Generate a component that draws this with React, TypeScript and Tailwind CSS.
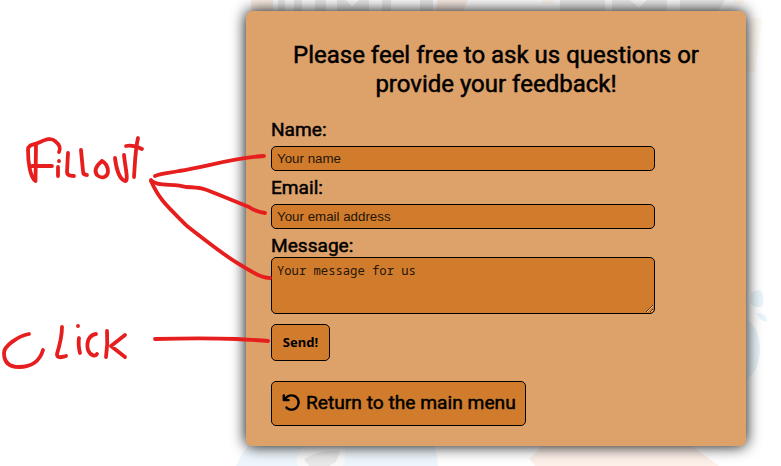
import React from "react";
import { FaArrowRotateLeft } from "react-icons/fa6";

const field =
  "block w-[384px] rounded-[5px] border border-black bg-[#d17c2c] px-[5px] text-black outline-none placeholder:text-[#241506] placeholder:opacity-100";
const textInput = "h-[25px] font-['Liberation_Sans',Arial,sans-serif] text-[13.333px]";
const label =
  "relative top-px block h-[22px] text-[19.1px] leading-[22px] [-webkit-text-stroke:0.5px_black]";

function Backdrop() {
  return (
    <svg className="absolute inset-0" width="781" height="466" viewBox="0 0 781 466" aria-hidden="true">
      <path d="M251 0h22v18h-22zM438 0h30l-9 20h-26z" fill="#fbeee6" />
      <path d="M278 0h7v15h-7zM294 0h8v15h-8zM315 0h11v15h-11zM337 0h9l6 7 7-7h10v15h-32zM382 0h9v15h-9zM420 0h13v15h-13z" fill="#ececec" />
      <path d="M542 0h11v4h-11zM733 0h11v4h-11zM751 18h11l-7 54h-9z" fill="#fef9f1" />
      <path d="M560 0h45v15h-45zM612 0h18l9 8 8-8h20v15h-55zM680 0h45l-9 15h-36z" fill="#ededed" />
      <path d="M748 321c16 10 16 47 0 57zM751 293c8-6 14-2 12 12-5 4-9 2-13-2zM757 313c7 0 10 3 10 9-6-1-9-4-10-9z" fill="#e8f4f9" />
      <path d="M236 466c4-10 8-16 14-22h183c3 7 5 14 5 22z" fill="#edf6fc" />
      <path d="M298 466c-3-10 1-17 10-20h36c3 6 1 13-1 20z" fill="#f8f9f8" />
      <path d="M304 459c12-7 23-10 36-8l-4 11-7 4h-20z" fill="#e8e8e8" />
      <path d="M529 458c6-2 8-9 14-12h149l27 20H535z" fill="#fdf0e9" />
    </svg>
  );
}

function Annotations() {
  return (
    <svg
      className="pointer-events-none absolute inset-0"
      width="781"
      height="466"
      viewBox="0 0 781 466"
      fill="none"
      stroke="#e71e1e"
      strokeWidth="3.8"
      strokeLinecap="round"
      strokeLinejoin="round"
      aria-hidden="true"
    >
      <path d="M36 145L35.500 181C30 177 28 162 28 150C28 144 34 145 39 142.500C45 140 51 137 55 141C60 145 61 148 59 152M32 166H52" />
      <path d="M59 161.200v-.2M58 167v9M68 153L67 172Q67 176 74 176M81 150L83 171Q83 175 87 175" />
      <path d="M102 161C96 166 94 171 97 175C101 179 107 178 108 172C108 167 106 163 102 161M115 158C116 167 119 179 125 181C129 182 125 166 124 155M138 138C135 151 135 164 134 177M126 146C132 145 136 146 142 149" />
      <path d="M155 176C163 173 170 173 179 171C206 167 232 158 264 156" />
      <path d="M151 180C156 187 174 183 186 187C205 188 202 188 217 194L249 207Q256 212 265 213" />
      <path d="M151 181C159 199 166 205 187 226C205 240 225 256 239 264C249 270 260 278 270 278" />
      <path d="M29 334C18 336 4 346 4 353C4 363 10 367 19 367C31 367 40 361 43 350M62 327C62 337 60 344 57 354C57 359 62 357 66 356M78 326v-.2M79 338C78 344 79 349 80 353M96 334C89 335 86 342 88 350C91 357 96 356 97 354M107 331Q108 344 106 357M125 335L111 346L125 357" />
      <path d="M155 339C190 338 211 338 237 339C250 340 258 340 268 341" />
    </svg>
  );
}

export default function App() {
  return (
    <div className="relative h-[466px] w-[781px] overflow-hidden bg-white font-[Roboto,sans-serif] text-black">
      <Backdrop />
      <main className="relative ml-[246px] pt-[11px]">
        <section className="h-[435px] w-[500px] rounded-[6px] bg-[#dda16a] px-[25px] pt-[30px] shadow-[0_0_15px_#000]">
          <h1 className="text-center text-[24px] leading-[29px] [-webkit-text-stroke:0.5px_black]">
            Please feel free to ask us questions or
            <br />
            provide your feedback!
          </h1>
          <form className="mt-[19px]" onSubmit={(e) => e.preventDefault()}>
            <label htmlFor="name" className={label}>Name:</label>
            <input
              id="name"
              placeholder="Your name"
              className={`${field} ${textInput} mt-[6px]`}
            />
            <label htmlFor="email" className={`${label} mt-[5px]`}>Email:</label>
            <input
              id="email"
              placeholder="Your email address"
              className={`${field} ${textInput} mt-[6px]`}
            />
            <label htmlFor="message" className={`${label} mt-[5px]`}>Message:</label>
            <textarea
              id="message"
              placeholder="Your message for us"
              className={`${field} mt-px h-[57px] resize pt-[5px] font-['Noto_Sans_Mono','DejaVu_Sans_Mono',monospace] text-[12.2px] leading-[16px]`}
            />
            <button className="mt-[10px] block h-[37px] w-[59px] rounded-[5px] border border-black bg-[#d17c2c] font-['Noto_Sans',sans-serif] text-[13px] font-bold">
              Send!
            </button>
          </form>
          <button className="mt-[20px] flex h-[45px] w-[255px] items-center rounded-[5px] border border-black bg-[#d17c2c] pl-[10px] text-[19.2px] [-webkit-text-stroke:0.5px_black]">
            <FaArrowRotateLeft className="mr-[5px] mb-[2px] shrink-0" size={19} strokeWidth={0} />
            <span className="whitespace-nowrap">Return to the main menu</span>
          </button>
        </section>
      </main>
      <Annotations />
    </div>
  );
}
